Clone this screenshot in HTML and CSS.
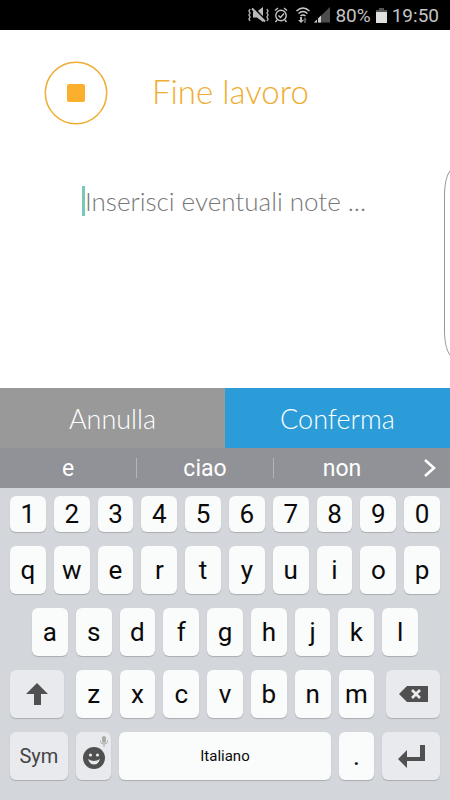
FILE: index.html
```html
<!DOCTYPE html>
<html lang="it">
<head>
<meta charset="utf-8">
<meta name="viewport" content="width=device-width, initial-scale=1">
<title>Fine lavoro</title>
<link rel="stylesheet" href="styles.css">
</head>
<body>
<header class="status">
  <div class="indicators">
    <svg width="24" height="16" viewBox="0 0 24 16" aria-hidden="true">
      <path d="M6 4.500h4L16 0v15l-6-4.500H6z" fill="#bbb"/>
      <path d="M6 0l13 14" stroke="#000" stroke-width="2"/>
      <path d="M5 1.500l13 13" stroke="#bbb" stroke-width="2"/>
      <path d="M3 2L2 4l1 2-1 2 1 2-1 2 1 2M20 2l1 2-1 2 1 2-1 2 1 2-1 2" stroke="#aaa" stroke-width="1.500" fill="none"/>
    </svg>
    <svg width="14" height="16" viewBox="0 0 14 16" aria-hidden="true">
      <g fill="none" stroke="#c4c4c4" stroke-width="1.400"><circle cx="7" cy="8.500" r="5.200"/><path d="M4.500 8.500l2 2 3.500-4M1 3.500L4 1M13 3.500L10 1M3 13l-1.500 2M11 13l1.500 2"/></g>
    </svg>
    <svg class="wifi" width="16" height="16" viewBox="0 0 16 16" aria-hidden="true">
      <path d="M1.500 4Q8-2 14.500 4M3.500 6.500Q8 2.500 12.500 6.500M5.500 9Q8 7 10.500 9" fill="none" stroke="#ccc" stroke-width="1.500"/>
      <path d="M5 10h2v3h2l-3 3-3-3h2z" fill="#bbb"/><path d="M9 16v-3H8l2-3 2 3h-1v3z" fill="#555"/>
    </svg>
    <svg width="16" height="16" viewBox="0 0 16 16" aria-hidden="true">
      <path d="M0 15.500L16 0v15.500z" fill="#4d4d4d"/><path d="M0 15.500l7-7v7z" fill="#ccc"/><path d="M3.500 11v5" stroke="#000"/>
    </svg>
  </div>
  <span>80%</span>
  <svg width="11" height="15" viewBox="0 0 11 15" aria-hidden="true"><path d="M3 0h5v2h3v3H0V2h3z" fill="#555"/><path d="M0 4h11v11H0z" fill="#e0e0e0"/></svg>
  <time>19:50</time>
</header>

<main class="note">
  <div class="heading">
    <svg width="64" height="64" viewBox="0 0 64 64" aria-hidden="true">
      <circle cx="32" cy="32" r="30.700" fill="none" stroke="#efad32" stroke-width="1.500"/>
      <rect x="23" y="23" width="18" height="18" rx="2" fill="#fbb02d"/>
    </svg>
    <h1>Fine lavoro</h1>
  </div>
  <div class="field">
    <input type="text" aria-label="Note" placeholder="Inserisci eventuali note ...">
  </div>
  <div class="edge"></div>
</main>

<div class="actions">
  <button class="cancel">Annulla</button>
  <button class="confirm">Conferma</button>
</div>

<div class="suggestions">
  <button>e</button>
  <button>ciao</button>
  <button>non</button>
  <button class="more" aria-label="Altri suggerimenti">
    <svg width="14" height="20" viewBox="0 0 14 20"><path d="M2 2l9 8-9 8" fill="none" stroke="#fff" stroke-width="2.600"/></svg>
  </button>
</div>

<div class="keyboard">
  <div class="row numbers"><button>1</button><button>2</button><button>3</button><button>4</button><button>5</button><button>6</button><button>7</button><button>8</button><button>9</button><button>0</button></div>
  <div class="row"><button>q</button><button>w</button><button>e</button><button>r</button><button>t</button><button>y</button><button>u</button><button>i</button><button>o</button><button>p</button></div>
  <div class="row"><button>a</button><button>s</button><button>d</button><button>f</button><button>g</button><button>h</button><button>j</button><button>k</button><button>l</button></div>
  <div class="row">
    <button class="special shift" aria-label="Maiuscole"><svg width="22" height="24" viewBox="0 0 22 24"><path d="M11 1l11 11h-7v11H8V12H0z" fill="#505050"/></svg></button>
    <button>z</button><button>x</button><button>c</button><button>v</button><button>b</button><button>n</button><button>m</button>
    <button class="special delete" aria-label="Cancella"><svg width="29" height="16" viewBox="0 0 29 16"><path d="M0 8l8-8h21v16H8z" fill="#505050"/><path d="M13 4l8 8M21 4l-8 8" stroke="#e9ebee" stroke-width="2.600"/></svg></button>
  </div>
  <div class="row">
    <button class="special wide sym">Sym</button>
    <button class="special emoji" aria-label="Emoji">
      <svg class="mic" width="8" height="11" viewBox="0 0 8 11"><rect x="2" width="4" height="7" rx="2" fill="#aaa"/><path d="M.5 4.500v1Q.5 8 4 8t3.500-2.500v-1M4 8v3" fill="none" stroke="#aaa"/></svg>
      <svg width="22" height="22" viewBox="0 0 22 22"><circle cx="11" cy="11" r="11" fill="#505050"/><circle cx="7.500" cy="8" r="1.600" fill="#e9ebee"/><circle cx="14.500" cy="8" r="1.600" fill="#e9ebee"/><path d="M5 12Q11 16 17 12Q15.500 17.500 11 17.500T5 12z" fill="#e9ebee"/></svg>
    </button>
    <button class="space">Italiano</button>
    <button>.</button>
    <button class="special wide" aria-label="Invio"><svg width="27" height="24" viewBox="0 0 27 24"><path d="M0 15l9-9v7h13V1h5v16H9v7z" fill="#505050"/></svg></button>
  </div>
</div>
</body>
</html>
```

FILE: styles.css
```css
* {
  box-sizing: border-box;
}

body {
  margin: 0;
  min-height: 100vh;
  display: flex;
  flex-direction: column;
  background: #fff;
  font-family: Roboto, "Liberation Sans", sans-serif;
}

button {
  border: 0;
  margin: 0;
  padding: 0;
  background: none;
  font: inherit;
  color: inherit;
}

svg {
  display: block;
  flex: none;
}

.status {
  display: flex;
  align-items: center;
  justify-content: flex-end;
  gap: 5px;
  height: 30px;
  padding: 0 11px;
  background: #000;
  color: #c4c4c4;
  font-size: 19px;
}

.indicators {
  display: flex;
  gap: 3px;
}

.wifi {
  margin-left: 4px;
}

.note {
  position: relative;
  flex: 1;
  padding: 31px 44px;
  overflow: hidden;
}

.heading {
  display: flex;
  align-items: center;
  gap: 44px;
}

h1 {
  margin: 0;
  padding-bottom: 4px;
  color: #efad32;
  font-family: Lato, sans-serif;
  font-size: 33px;
  font-weight: 300;
  line-height: 60px;
}

.field {
  margin: 61px 0 0 38px;
  border-left: 3px solid #79c9b9;
}

.field input {
  display: block;
  width: 100%;
  height: 30px;
  padding: 0;
  border: 0;
  outline: 0;
  background: none;
  font-family: Lato, sans-serif;
  font-size: 26px;
  font-weight: 300;
}

.field input::placeholder {
  color: #777;
  opacity: 1;
}

.edge {
  position: absolute;
  top: 138px;
  right: -14px;
  width: 20px;
  height: 190px;
  border: 1px solid #999;
  border-radius: 12px / 32px;
}

.actions {
  display: grid;
  grid-template-columns: 1fr 1fr;
  height: 60px;
  color: #fff;
  font-family: Lato, sans-serif;
  font-size: 27px;
  font-weight: 300;
}

.cancel {
  background: #999;
}

.confirm {
  background: #2b9cd8;
}

.suggestions {
  display: flex;
  align-items: center;
  height: 40px;
  background: #919297;
  color: #fff;
  font-size: 23px;
}

.suggestions button {
  flex: 1;
  height: 20px;
  line-height: 22px;
}

.suggestions button + button:not(.more) {
  border-left: 1px solid #b4b5b9;
}

.suggestions .more {
  flex: 0 0 40px;
  display: flex;
  justify-content: center;
}

.keyboard {
  --key: calc((100% - 72px) / 10);
  display: flex;
  flex-direction: column;
  gap: 14px;
  padding: 8px 10px 20px;
  background: #d3d6db;
  color: #0a0a0a;
  font-size: 26px;
}

.row {
  display: flex;
  justify-content: center;
  gap: 8px;
  height: 48px;
}

.numbers {
  height: 36px;
}

.row button {
  flex: 0 0 var(--key);
  display: flex;
  align-items: center;
  justify-content: center;
  border-radius: 6px;
  background: #fafbfb;
  box-shadow: 0 1px 1px #a9acb1;
}

.row .special {
  background: #e8eaed;
}

.row .shift,
.row .delete {
  flex: 1;
}

.shift {
  margin-right: 4px;
}

.delete {
  margin-left: 4px;
}

.row .wide {
  flex-basis: calc(var(--key) * 1.5 + 4px);
}

.row .sym {
  color: #444;
  font-size: 20px;
}

.row .space {
  flex: 1;
  font-size: 15px;
}

.row .emoji {
  position: relative;
  align-items: flex-end;
  padding-bottom: 11px;
}

.mic {
  position: absolute;
  top: 4px;
  right: 3px;
}
```
